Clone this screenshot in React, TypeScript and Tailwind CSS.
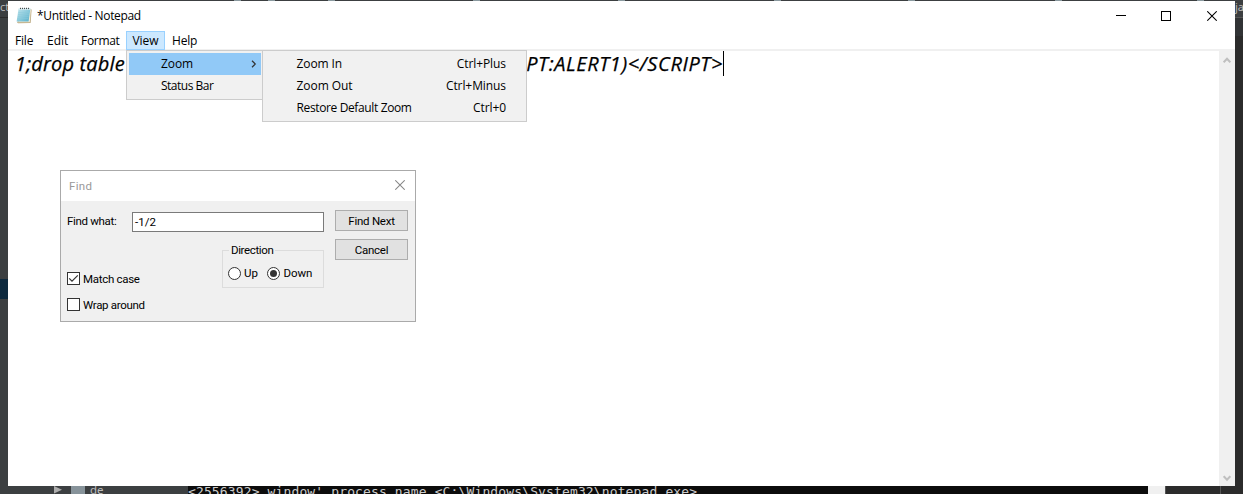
import type { ReactNode } from "react";

const ui = "font-['Open_Sans','Noto_Sans',sans-serif]";
const dlg = "font-['Roboto','Liberation_Sans',sans-serif]";

function Cross({ size, color }: { size: number; color: string }) {
  return (
    <svg width={size} height={size} viewBox="0 0 10 10" fill="none" stroke={color} strokeWidth="1.05">
      <path d="M0.3 0.3 9.7 9.7M9.7 0.3 0.3 9.7" />
    </svg>
  );
}

function NotepadIcon() {
  return (
    <svg width="16" height="17" viewBox="0 0 16 17">
      <defs>
        <linearGradient id="page" x1="0" y1="0" x2="1" y2="1">
          <stop offset="0" stopColor="#c3e6ee" />
          <stop offset="1" stopColor="#56b0cb" />
        </linearGradient>
      </defs>
      <path d="M14.2 2 15.6 2.4 14.6 15.9 2 16.2 1 15.2z" fill="#b9a67c" />
      <path d="M14 2 15 2.2 13.8 15.2H1.6z" fill="#f1ead6" />
      <path d="M2.6 1.5h11.8L12.6 14.6H.6z" fill="url(#page)" />
      <path d="M2.5 5.5h10.6M2.2 7.5h10.6M1.9 9.5h10.6M1.6 11.5h10.6" stroke="#8ccadb" strokeWidth="0.5" />
      <path d="M3 2.2h11.2" stroke="#dceff3" strokeWidth="1.2" />
      <path d="M4.5 .8v1.3M6.5 .8v1.3M8.5 .8v1.3M10.5 .8v1.3M12.5 .8v1.3" stroke="#4a4a4a" strokeWidth="1" />
    </svg>
  );
}

function Chevron({ down = false }: { down?: boolean }) {
  return (
    <svg width="8" height="7" viewBox="0 0 8 7" fill="none" stroke="#bfbfbf" strokeWidth="2">
      <path d={down ? "M.7 1.2 4 4.7 7.3 1.2" : "M.7 5.3 4 1.8 7.3 5.3"} />
    </svg>
  );
}

function SubRow({ label, keys, spacing }: { label: string; keys: string; spacing: string }) {
  return (
    <div className="flex h-[22px] items-center justify-between pl-[31.5px] pr-[18px]">
      <span className={spacing}>{label}</span>
      <span className="tracking-[-0.08px]">{keys}</span>
    </div>
  );
}

function Menus() {
  return (
    <>
      <div className="absolute left-[118px] top-[49px] z-10 h-[50px] w-[138px] border border-[#ccc] bg-[#f1f1f1] p-[2px]">
        <div className="flex h-[22px] items-center justify-between bg-[#91c9f7] pl-[32px] pr-[4px]">
          <span className="tracking-[-0.1px]">Zoom</span>
          <svg width="6" height="8" viewBox="0 0 6 8" fill="none" stroke="#333" strokeWidth="1.2"><path d="M1 .8 4.3 4 1 7.2" /></svg>
        </div>
        <div className="flex h-[22px] items-center pl-[32px]">
          <span className="tracking-[-0.5px]">Status Bar</span>
        </div>
      </div>
      <div className="absolute left-[254px] top-[49px] z-10 h-[72px] w-[265px] border border-[#ccc] bg-[#f1f1f1] p-[2px]">
        <SubRow label="Zoom In" keys="Ctrl+Plus" spacing="tracking-[-0.1px]" />
        <SubRow label="Zoom Out" keys="Ctrl+Minus" spacing="tracking-[-0.05px]" />
        <SubRow label="Restore Default Zoom" keys="Ctrl+0" spacing="tracking-[-0.37px]" />
      </div>
    </>
  );
}

function Button({ children }: { children: ReactNode }) {
  return <button className="flex h-[21px] w-[73px] items-center justify-center border border-[#adadad] bg-[#e1e1e1] tracking-[-0.25px]">{children}</button>;
}

function Check({ label, checked = false }: { label: string; checked?: boolean }) {
  return (
    <div className="flex h-[13px] items-center gap-[3px]">
      <span className="flex size-[13px] items-center justify-center border border-[#333] bg-white">
        {checked && (
          <svg width="11" height="11" viewBox="0 0 11 11" fill="none" stroke="#333" strokeWidth="1.2"><path d="M1.2 5.3 4 8.2 9.8 2.3" /></svg>
        )}
      </span>
      <span className="tracking-[-0.3px]">{label}</span>
    </div>
  );
}

function Radio({ label, checked = false }: { label: string; checked?: boolean }) {
  return (
    <div className="flex items-center gap-[3px]">
      <span className="flex size-[13px] items-center justify-center rounded-full border border-[#333] bg-white">
        {checked && <span className="size-[7px] rounded-full bg-[#333]" />}
      </span>
      <span className="tracking-[-0.05px]">{label}</span>
    </div>
  );
}

function FindDialog() {
  return (
    <div className={`absolute left-[52px] top-[169px] flex h-[152px] w-[356px] flex-col border border-[#aaa] bg-[#f0f0f0] text-[11.5px] leading-[14px] text-black ${dlg}`}>
      <div className="flex h-[30px] items-center justify-between bg-white pl-[8px] pr-[10px] text-[#999]">
        <span className="tracking-[0.3px]">Find</span>
        <div className="pb-[2px]"><Cross size={10} color="#888" /></div>
      </div>
      <div className="flex pl-[6px] pr-[7px] pt-[9px]">
        <div className="w-[257px]">
          <div className="flex items-center pt-[2px]">
            <span className="w-[65px] pb-[3px] tracking-[-0.32px]">Find what:</span>
            <div className="flex h-[20px] w-[192px] items-center border border-[#7a7a7a] bg-white pl-[2px]">-1/2</div>
          </div>
          <div className="flex justify-between">
            <div className="flex flex-col gap-[13px] pt-[40px]">
              <Check label="Match case" checked />
              <Check label="Wrap around" />
            </div>
            <fieldset className="mt-[11px] h-[45px] w-[102px] border border-[#dcdcdc] pl-[5px]">
              <legend className="ml-[1px] h-[14px] px-[2px] tracking-[-0.37px]">Direction</legend>
              <div className="flex gap-[9.6px] pt-[9px]">
                <Radio label="Up" />
                <Radio label="Down" checked />
              </div>
            </fieldset>
          </div>
        </div>
        <div className="ml-auto flex flex-col gap-[8px]">
          <Button>Find Next</Button>
          <Button>Cancel</Button>
        </div>
      </div>
    </div>
  );
}

const tabGaps = [226, 27, 53, 138, 138, 149, 127, 140, 135];

function Backdrop() {
  return (
    <div className="absolute inset-0 flex flex-col justify-between">
      <div className="flex h-[300px] justify-between">
        <div className="w-[8px] overflow-hidden text-[11px] leading-[14px] text-[#b8b8b8]">
          <div className="h-[18px] border-b border-[#2b2b2b] font-['Noto_Sans']">ct</div>
          <div className="mt-[261px] h-[20px] bg-[#0d293e]" />
        </div>
        <div className="flex h-px flex-1">
          {tabGaps.map((gap, n) => <span key={n} className="h-px w-[7px] bg-[#8a999f]" style={{ marginLeft: gap }} />)}
        </div>
        <div className="h-full w-[8px] overflow-hidden bg-[#2b2b2b] text-[11px] leading-[14px] text-[#b8b8b8]">
          <div className="h-[18px] border-b border-[#555] bg-[#3c3f41] font-['Noto_Sans']">ja</div>
          <div className="h-[18px] bg-[#313335]" />
        </div>
      </div>
      <div className="flex h-[194px] items-end">
        <div className="flex h-[8px] w-[188px] overflow-hidden pl-[54px]">
          <svg width="9" height="8" viewBox="0 0 9 8"><path d="M0 0 8 3.8 0 7.6z" fill="#adadad" /></svg>
          <span className="ml-[8px] h-[8px] w-[14px] bg-[#87939a]" />
          <span className="ml-[5px] font-['Noto_Sans'] text-[11.5px] leading-[7px] text-[#bbb]">de</span>
        </div>
        <div className="h-[8px] w-[960px] overflow-hidden bg-[#0c0c0c]">
          <div className="whitespace-pre font-['DejaVu_Sans_Mono','Liberation_Mono',monospace] text-[13px] leading-[12px] tracking-[0.13px] text-[#ccc]">{"<2556392> window' process name <C:\\Windows\\System32\\notepad.exe>"}</div>
        </div>
        <div className="h-[8px] w-[17px] bg-[#f0f0f0]" />
        <div className="flex h-[8px] w-[56px] border-l border-[#555] bg-[#2b2b2b]"><span className="ml-[54px] w-px bg-[#555]" /></div>
        <div className="h-[194px] flex-1 bg-[#2b2b2b]" />
      </div>
    </div>
  );
}

export default function App() {
  return (
    <div className={`relative h-[494px] w-[1243px] overflow-hidden bg-[#3c3f41] text-[12px] leading-[16px] text-black ${ui}`}>
      <Backdrop />
      <main className="relative ml-[8px] mt-px flex h-[485px] w-[1227px] flex-col bg-white">
        <header className="flex h-[29px] items-center pl-[8px]">
          <NotepadIcon />
          <span className="ml-[5px] tracking-[-0.33px]">*Untitled - Notepad</span>
          <div className="ml-auto flex items-center pr-[18px]">
            <span className="h-px w-[10px] bg-black" />
            <span className="ml-[35px] size-[10px] border border-black" />
            <span className="ml-[36px]"><Cross size={10} color="#000" /></span>
          </div>
        </header>
        <nav className="relative z-[1] mt-px flex h-[19px] items-center">
          <span className="w-[32px] pl-[7px] tracking-[-0.2px]">File</span>
          <span className="w-[34px] pl-[7px]">Edit</span>
          <span className="w-[52px] pl-[7px] tracking-[-0.3px]">Format</span>
          <span className="flex h-[19px] w-[39px] items-center justify-center border border-[#99d1ff] bg-[#cce8ff]">View</span>
          <span className="pl-[7px] tracking-[-0.2px]">Help</span>
        </nav>
        <div className="-mt-px h-[2px] bg-[#f0f0f0]" />
        <section className="flex flex-1 justify-between">
          <div className="flex h-[25px] w-[716px] justify-between whitespace-nowrap border-r border-black pl-[7px] font-['Open_Sans','Noto_Sans',sans-serif] text-[20px] italic leading-[25px] [-webkit-text-stroke:0.25px_black]">
            <span className="tracking-[0.15px]">1;drop table</span>
            <span className="tracking-[0.6px]">PT:ALERT1)&lt;/SCRIPT&gt;</span>
          </div>
          <div className="flex w-[16px] flex-col items-center justify-between bg-[#f0f0f0] pb-[4px] pt-[6px]">
            <Chevron />
            <Chevron down />
          </div>
        </section>
        <Menus />
        <FindDialog />
      </main>
    </div>
  );
}
